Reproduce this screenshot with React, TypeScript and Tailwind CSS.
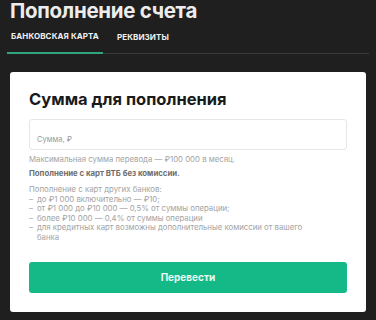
import React from 'react';

const fees = [
  'до ₽1 000 включительно — ₽10;',
  'от ₽1 000 до ₽10 000 — 0,5% от суммы операции;',
  'более ₽10 000 — 0,4% от суммы операции',
  'для кредитных карт возможны дополнительные комиссии от вашего банка',
];

export default function App() {
  return (
    <div className="h-[320px] w-full overflow-hidden bg-[#1f1f1f] font-['Inter','Liberation_Sans',sans-serif]">
      <h1 className="pl-[10px] text-[20.5px] font-bold leading-[22px] tracking-[-0.3px] text-[#ececec]">
        Пополнение счета
      </h1>

      <div className="mx-[7px] mt-[9px] flex border-b border-[#3a3a3a]">
        <button className="-mb-px border-b-2 border-[#2fa57c] px-[4px] pb-[11px] text-[8px] font-bold uppercase leading-[10px] tracking-[0.1px] text-[#f0f0f0]">
          Банковская карта
        </button>
        <button className="ml-[10px] px-[4px] pb-[11px] text-[8px] font-bold uppercase leading-[10px] tracking-[0.1px] text-[#f0f0f0]">
          Реквизиты
        </button>
      </div>

      <div className="mx-[10px] mt-[18px] h-[240px] rounded-[3px] bg-white px-[19px] pt-[16px]">
        <h2 className="text-[16.5px] font-bold leading-[22px] text-[#1a1a1a]">Сумма для пополнения</h2>

        <div className="mt-[9px] h-[31px] rounded-[3px] border border-[#e6e6e6] px-[7px] pt-[4px]">
          <span className="text-[7.5px] leading-[10px] text-[#9a9a9a]">Сумма, ₽</span>
        </div>

        <div className="mt-[5px] text-[7.8px] leading-[9.6px] text-[#a3a3a3]">
          <p>Максимальная сумма перевода — ₽100 000 в месяц.</p>
          <p className="mt-[4.4px] font-bold text-[#6e6e6e]">Пополнение с карт ВТБ без комиссии.</p>
          <p className="mt-[6.4px]">Пополнение с карт других банков:</p>
          <ul className="w-[290px]">
            {fees.map((f) => (
              <li key={f} className="flex gap-[4px]">
                <span>–</span>
                <span>{f}</span>
              </li>
            ))}
          </ul>
        </div>

        <button className="mt-[19px] h-[31px] w-full rounded-[3px] bg-[#15b887] text-[10px] font-bold text-[#eafaf3]">
          Перевести
        </button>
      </div>
    </div>
  );
}
